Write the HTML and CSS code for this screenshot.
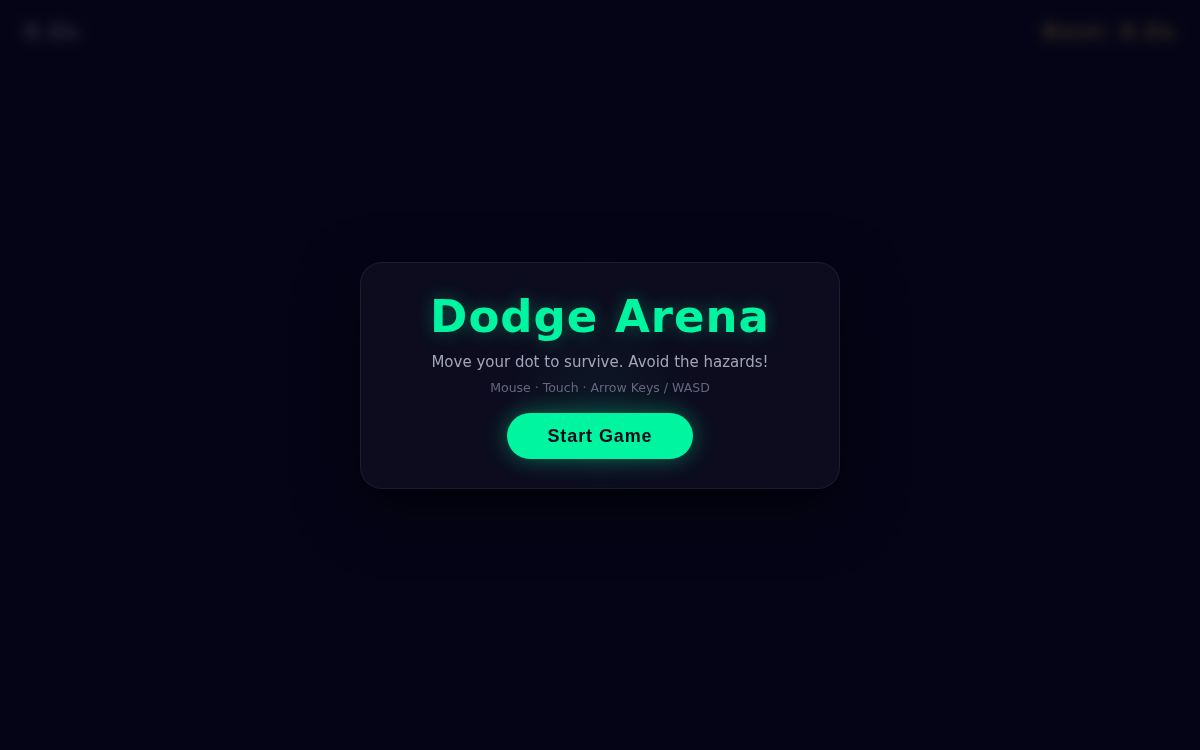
FILE: index.html
```html
<!DOCTYPE html>
<html lang="en">
<head>
<meta charset="utf-8">
<title>Dodge Arena</title>
<link rel="stylesheet" href="styles.css">
</head>
<body>
<div class="game">
  <div class="hud">
    <div class="time">0.0s</div>
    <div class="best">Best: 0.0s</div>
  </div>
  <div class="overlay">
    <div class="card">
      <h1 class="title">Dodge Arena</h1>
      <p class="sub">Move your dot to survive. Avoid the hazards!</p>
      <p class="hint">Mouse · Touch · Arrow Keys / WASD</p>
      <button class="start">Start Game</button>
    </div>
  </div>
</div>
</body>
</html>
```

FILE: styles.css
```css
html, body {
  margin: 0;
  padding: 0;
  height: 100%;
  background: #05051a;
  font-family: "DejaVu Sans", sans-serif;
  overflow: hidden;
}

.game {
  position: relative;
  width: 100%;
  height: 100%;
  background: #05051a;
}

.hud {
  display: flex;
  justify-content: space-between;
  padding: 19px 24px;
  font-weight: bold;
  font-size: 22px;
  letter-spacing: 1px;
}

.time {
  color: #c8c8dc;
}

.best {
  color: #ffc94a;
}

.overlay {
  position: absolute;
  inset: 0;
  display: flex;
  align-items: center;
  justify-content: center;
  background: rgba(5, 5, 22, 0.82);
  backdrop-filter: blur(6px);
}

.card {
  width: 480px;
  box-sizing: border-box;
  padding: 28px 20px 29px;
  display: flex;
  flex-direction: column;
  align-items: center;
  text-align: center;
  background: radial-gradient(circle at 50% 62%, rgba(0, 245, 160, 0.05) 0, rgba(0, 245, 160, 0) 90px), rgba(13, 13, 32, 0.9);
  border: 1px solid rgba(255, 255, 255, 0.07);
  border-radius: 22px;
  box-shadow: 0 20px 60px rgba(0, 0, 0, 0.55);
}

.title {
  margin: 0;
  font-size: 45px;
  font-weight: bold;
  letter-spacing: 1px;
  color: #00f5a0;
  text-shadow: 0 0 18px rgba(0, 245, 160, 0.3);
  line-height: 52px;
}

.sub {
  margin: 9px 0 0;
  font-size: 15px;
  color: #a4a4b8;
  line-height: 20px;
}

.hint {
  margin: 8px 0 0;
  font-size: 12.5px;
  color: #66667e;
  line-height: 16px;
}

.start {
  margin-top: 17px;
  padding: 12px 40px;
  border: none;
  border-radius: 999px;
  background: #00f5a0;
  color: #0a0a1a;
  font-family: "Liberation Sans", Arial, sans-serif;
  font-weight: bold;
  font-size: 18px;
  letter-spacing: 0.9px;
  line-height: 22px;
  box-shadow: 0 0 22px rgba(0, 245, 160, 0.4);
  cursor: pointer;
}
```
